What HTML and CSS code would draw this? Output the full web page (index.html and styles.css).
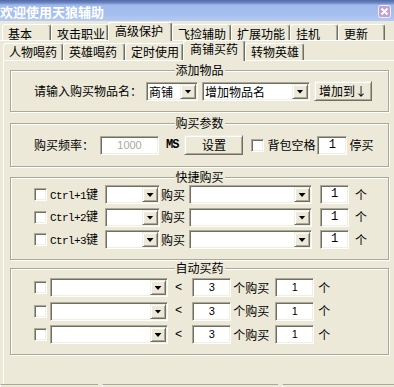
FILE: index.html
```html
<!DOCTYPE html>
<html lang="zh">

<head>
    <meta charset="UTF-8">
    <title>欢迎使用天狼辅助</title>
    <link rel="stylesheet" href="styles.css">
</head>

<body>
    <div class="window">
        <div class="titlebar">
            <span class="title">欢迎使用天狼辅助</span>
            <svg class="close" width="13" height="13" viewBox="0 0 13 13">
                <rect x="0.5" y="0.5" width="12" height="12" rx="2" fill="#c0a3d4" stroke="#f4ecfa"/>
                <path d="M3.5 3.5 L9.5 9.5 M9.5 3.5 L3.5 9.5" stroke="#fff" stroke-width="1.8"/>
            </svg>
        </div>

        <div class="tabs outer">
            <span class="tab t49">基本</span>
            <span class="tab t57">攻击职业</span>
            <span class="tab t64 active">高级保护</span>
            <span class="tab t59">飞捡辅助</span>
            <span class="tab t59">扩展功能</span>
            <span class="tab t48">挂机</span>
            <span class="tab t47">更新</span>
        </div>

        <div class="tabs inner">
            <span class="tab t60">人物喝药</span>
            <span class="tab t62">英雄喝药</span>
            <span class="tab t58">定时使用</span>
            <span class="tab t62 active">商铺买药</span>
            <span class="tab t59">转物英雄</span>
        </div>

        <div class="panel">
            <!-- 添加物品 -->
            <div class="group g-add">
                <span class="legend">添加物品</span>
                <div class="row">
                    <span class="text">请输入购买物品名：</span>
                    <div class="combo shop"><span class="combo-text">商铺</span><span class="drop"></span></div>
                    <div class="combo name"><span class="combo-text">增加物品名</span><span class="drop"></span></div>
                    <button class="btn add">增加到↓</button>
                </div>
            </div>

            <!-- 购买参数 -->
            <div class="group g-param">
                <span class="legend">购买参数</span>
                <div class="row">
                    <span class="text">购买频率：</span>
                    <span class="edit freq">1000</span>
                    <span class="ms">MS</span>
                    <button class="btn set">设置</button>
                    <span class="check bag"></span>
                    <span class="text bag-label">背包空格</span>
                    <span class="edit stop mono">1</span>
                    <span class="text stop-label">停买</span>
                </div>
            </div>

            <!-- 快捷购买 -->
            <div class="group g-quick">
                <span class="legend">快捷购买</span>
                <div class="rows">
                    <div class="row">
                        <span class="check"></span>
                        <span class="key"><span class="mono-key">Ctrl+1</span>键</span>
                        <div class="combo hotkey"><span class="combo-text"></span><span class="drop"></span></div>
                        <span class="text buy">购买</span>
                        <div class="combo goods"><span class="combo-text"></span><span class="drop"></span></div>
                        <span class="edit qty mono">1</span>
                        <span class="text unit">个</span>
                    </div>
                    <div class="row">
                        <span class="check"></span>
                        <span class="key"><span class="mono-key">Ctrl+2</span>键</span>
                        <div class="combo hotkey"><span class="combo-text"></span><span class="drop"></span></div>
                        <span class="text buy">购买</span>
                        <div class="combo goods"><span class="combo-text"></span><span class="drop"></span></div>
                        <span class="edit qty mono">1</span>
                        <span class="text unit">个</span>
                    </div>
                    <div class="row">
                        <span class="check"></span>
                        <span class="key"><span class="mono-key">Ctrl+3</span>键</span>
                        <div class="combo hotkey"><span class="combo-text"></span><span class="drop"></span></div>
                        <span class="text buy">购买</span>
                        <div class="combo goods"><span class="combo-text"></span><span class="drop"></span></div>
                        <span class="edit qty mono">1</span>
                        <span class="text unit">个</span>
                    </div>
                </div>
            </div>

            <!-- 自动买药 -->
            <div class="group g-auto">
                <span class="legend">自动买药</span>
                <div class="rows">
                    <div class="row">
                        <span class="check"></span>
                        <div class="combo potion"><span class="combo-text"></span><span class="drop"></span></div>
                        <span class="lt">&lt;</span>
                        <span class="edit limit">3</span>
                        <span class="text buy-n">个购买</span>
                        <span class="edit amount">1</span>
                        <span class="text unit-n">个</span>
                    </div>
                    <div class="row">
                        <span class="check"></span>
                        <div class="combo potion"><span class="combo-text"></span><span class="drop"></span></div>
                        <span class="lt">&lt;</span>
                        <span class="edit limit">3</span>
                        <span class="text buy-n">个购买</span>
                        <span class="edit amount">1</span>
                        <span class="text unit-n">个</span>
                    </div>
                    <div class="row">
                        <span class="check"></span>
                        <div class="combo potion"><span class="combo-text"></span><span class="drop"></span></div>
                        <span class="lt">&lt;</span>
                        <span class="edit limit">3</span>
                        <span class="text buy-n">个购买</span>
                        <span class="edit amount">1</span>
                        <span class="text unit-n">个</span>
                    </div>
                </div>
            </div>
        </div>

        <div class="statusbar">
            <span class="seg s1"></span>
            <span class="seg s2"></span>
            <span class="seg s3"></span>
        </div>
    </div>
</body>

</html>
```

FILE: styles.css
```css
* {
    box-sizing: border-box;
}

body {
    margin: 0;
    background: #ece9d8;
    color: #000;
    font-family: "Noto Sans CJK SC", "Noto Sans", sans-serif;
    font-size: 12px;
}

.window {
    width: 394px;
    height: 387px;
    overflow: hidden;
    display: flex;
    flex-direction: column;
}

/* title bar */
.titlebar {
    height: 21px;
    flex: none;
    display: flex;
    align-items: center;
    justify-content: space-between;
    padding-right: 3px;
    background: linear-gradient(#52699f 0, #6d88c8 3px, #a0baec 5px, #a6bff0 14px, #b4caf4 21px);
}

.title {
    color: #fff;
    font-weight: bold;
    font-size: 13px;
    line-height: 15px;
    margin-top: 2px;
    white-space: nowrap;
}

.close {
    display: block;
    margin-top: 1px;
}

/* tabs */
.tabs {
    flex: none;
    display: flex;
    align-items: flex-end;
    border-bottom: 1px solid #fff;
}

.tabs.outer {
    height: 20px;
    padding-left: 2px;
}

.tabs.inner {
    height: 20px;
    margin-left: 3px;
}

.tab {
    flex: none;
    padding-left: 5px;
    border: 1px solid #fff;
    border-bottom: 0;
    border-right-color: #716f64;
    border-radius: 3px 3px 0 0;
    box-shadow: inset -1px 0 #aca899;
    line-height: 13px;
    white-space: nowrap;
}

.outer .tab {
    height: 16px;
    padding-top: 2px;
}

.outer .tab.active {
    height: 19px;
    padding-top: 1px;
    padding-left: 6px;
    margin-bottom: -1px;
    background: #ece9d8;
}

.inner .tab {
    height: 17px;
    padding-top: 1px;
}

.inner .tab.active {
    height: 21px;
    padding-top: 1px;
    padding-left: 6px;
    margin-bottom: -1px;
    background: #ece9d8;
}

.t47 { width: 47px; }
.t48 { width: 48px; }
.t49 { width: 49px; }
.t57 { width: 57px; }
.t58 { width: 58px; }
.t59 { width: 59px; }
.t60 { width: 60px; }
.t62 { width: 62px; }
.t64 { width: 64px; }

/* panel and group boxes */
.panel {
    flex: 1;
    margin-left: 3px;
    border-left: 1px solid #fff;
    padding: 9px 5px 0 6px;
}

.group {
    position: relative;
    border: 1px solid #aca899;
    box-shadow: inset 1px 1px #fff, 1px 1px #fff;
    padding-left: 23px;
}

.legend {
    position: absolute;
    top: -8px;
    left: 50%;
    transform: translateX(-50%);
    padding: 0 1px;
    background: #ece9d8;
    line-height: 14px;
    white-space: nowrap;
}

.g-add {
    padding-top: 10px;
    padding-bottom: 10px;
}

.g-param {
    margin-top: 11px;
    padding-top: 11px;
    padding-bottom: 11px;
}

.g-quick {
    margin-top: 10px;
    padding-top: 7px;
    padding-bottom: 10px;
}

.g-auto {
    margin-top: 8px;
    padding-top: 9px;
    padding-bottom: 10px;
}

.rows {
    display: flex;
    flex-direction: column;
}

.g-quick .rows {
    gap: 3.5px;
}

.g-auto .rows {
    gap: 4.5px;
}

.row {
    display: flex;
    align-items: center;
    height: 19px;
    white-space: nowrap;
}

.g-add .row,
.g-param .row {
    height: 20px;
}

.text {
    line-height: 14px;
}

/* controls */
.combo {
    flex: none;
    display: flex;
    height: 19px;
    padding: 1px;
    background: #fff;
    border: 1px solid;
    border-color: #aca899 #fff #fff #aca899;
    box-shadow: inset 1px 1px #716f64, inset -1px -1px #f1efe2;
}

.combo-text {
    flex: 1;
    padding-left: 1px;
    line-height: 15px;
    overflow: hidden;
}

.drop {
    flex: none;
    width: 16px;
    display: flex;
    align-items: center;
    justify-content: center;
    background: #ece9d8;
    border: 1px solid;
    border-color: #f1efe2 #716f64 #716f64 #f1efe2;
    box-shadow: inset 1px 1px #fff, inset -1px -1px #aca899;
}

.drop::after {
    content: "";
    width: 7px;
    height: 4px;
    margin-top: 1px;
    background: #000;
    clip-path: polygon(0 0, 100% 0, 50% 100%);
}

.edit {
    flex: none;
    height: 19px;
    padding: 1px;
    background: #fff;
    border: 1px solid;
    border-color: #aca899 #fff #fff #aca899;
    box-shadow: inset 1px 1px #716f64, inset -1px -1px #f1efe2;
    text-align: center;
    font-family: "Liberation Sans", sans-serif;
    font-size: 11px;
    line-height: 15px;
}

.edit.mono {
    font-family: "Liberation Mono", monospace;
    font-size: 12px;
}

.check {
    flex: none;
    width: 13px;
    height: 13px;
    background: #fff;
    border: 1px solid;
    border-color: #aca899 #fff #fff #aca899;
    box-shadow: inset 1px 1px #716f64, inset -1px -1px #f1efe2;
}

.btn {
    flex: none;
    height: 20px;
    padding: 0;
    font: inherit;
    color: #000;
    line-height: 16px;
    background: #ece9d8;
    border: 1px solid;
    border-color: #f1efe2 #716f64 #716f64 #f1efe2;
    box-shadow: inset 1px 1px #fff, inset -1px -1px #aca899;
}

/* 添加物品 */
.combo.shop { width: 52px; margin-left: 4px; }
.combo.name { width: 108px; margin-left: 4px; }
.btn.add { width: 58px; margin-left: 4px; }

/* 购买参数 */
.edit.freq { width: 59px; margin-left: 6px; color: #aca899; }

.ms {
    margin-left: 7px;
    font-family: "Liberation Mono", monospace;
    font-weight: bold;
    font-size: 12px;
    letter-spacing: -1px;
}

.btn.set { width: 59px; margin-left: 6px; }
.check.bag { margin-left: 8px; }
.bag-label { margin-left: 3px; }
.edit.stop { width: 30px; margin-left: 2px; }
.stop-label { margin-left: 2px; }

/* 快捷购买 */
.key {
    margin-left: 3px;
    line-height: 14px;
}

.mono-key {
    font-family: "Liberation Mono", monospace;
    font-size: 11px;
    letter-spacing: -0.6px;
}

.combo.hotkey { width: 55px; margin-left: 7px; }
.buy { margin-left: 1px; }
.combo.goods { width: 123px; margin-left: 4px; }
.edit.qty { width: 29px; margin-left: 8px; }
.unit { margin-left: 6px; }

/* 自动买药 */
.combo.potion { width: 118px; margin-left: 3px; }

.lt {
    margin-left: 7px;
    font-family: "Liberation Mono", monospace;
    font-size: 12px;
}

.edit.limit { width: 39px; margin-left: 10px; }
.buy-n { margin-left: 2px; }
.edit.amount { width: 39px; margin-left: 6px; }
.unit-n { margin-left: 4px; }

/* status bar */
.statusbar {
    flex: none;
    height: 3px;
    display: flex;
    gap: 4px;
}

.seg {
    border-top: 1px solid #aca899;
    border-left: 1px solid #fff;
}

.s1 { width: 98px; }
.s2 { width: 176px; }
.s3 { flex: 1; }
```
